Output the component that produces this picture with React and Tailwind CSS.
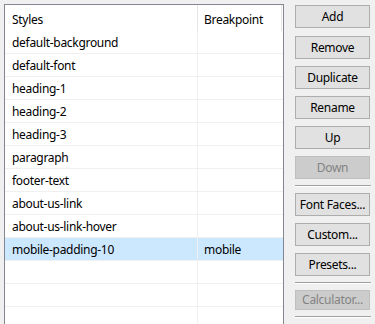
const styles = [
  { name: 'default-background', bp: '' },
  { name: 'default-font', bp: '' },
  { name: 'heading-1', bp: '' },
  { name: 'heading-2', bp: '' },
  { name: 'heading-3', bp: '' },
  { name: 'paragraph', bp: '' },
  { name: 'footer-text', bp: '' },
  { name: 'about-us-link', bp: '' },
  { name: 'about-us-link-hover', bp: '' },
  { name: 'mobile-padding-10', bp: 'mobile', selected: true },
  { name: '', bp: '' },
  { name: '', bp: '' },
  { name: '', bp: '' },
];

const Button = ({ label, disabled }) => (
  <div
    className={`h-[23px] w-[75px] flex items-center justify-center border text-[12px] ${
      disabled ? 'bg-[#cccccc] border-[#bfbfbf] text-[#838383]' : 'bg-[#e1e1e1] border-[#adadad] text-black'
    }`}
  >
    {label}
  </div>
);

const Separator = () => (
  <div className="my-[6px] w-[76px]">
    <div className="h-px bg-[#a0a0a0]"></div>
    <div className="h-px bg-white"></div>
  </div>
);

const App = () => {
  return (
    <div
      className="w-[375px] h-[324px] overflow-hidden bg-[#f0f0f0] flex pl-[4px] pt-[4px] tracking-[-0.3px]"
      style={{ fontFamily: '"Noto Sans", "Open Sans", sans-serif' }}
    >
      {/* list view */}
      <div className="w-[280px] h-[340px] border border-[#828790] bg-white flex flex-col shrink-0">
        <div className="flex h-[26px] text-[12px] text-black">
          <div className="w-[193px] pl-[7px] flex items-center pt-[3px] border-r border-[#e5e5e5]">Styles</div>
          <div className="w-[84px] pl-[6px] flex items-center pt-[3px] border-r border-[#e5e5e5]">Breakpoint</div>
        </div>
        {styles.map((row, i) => (
          <div
            key={i}
            className={`flex h-[23px] border-b border-[#f0f0f0] text-[12px] text-black ${
              row.selected ? 'bg-[#cce8ff]' : ''
            }`}
          >
            <div className="w-[193px] pl-[7px] pt-[1px] flex items-center border-r border-[#f0f0f0] leading-none">
              {row.name}
            </div>
            <div className="flex-1 pl-[6px] pt-[1px] flex items-center leading-none">{row.bp}</div>
          </div>
        ))}
      </div>

      {/* buttons */}
      <div className="ml-[11px] pt-[1px] flex flex-col">
        <div className="flex flex-col gap-[7px]">
          <Button label="Add" />
          <div className="mt-[1px]">
            <Button label="Remove" />
          </div>
          <Button label="Duplicate" />
          <Button label="Rename" />
          <Button label="Up" />
          <Button label="Down" disabled />
        </div>
        <Separator />
        <div className="flex flex-col gap-[7px]">
          <Button label="Font Faces..." />
          <Button label="Custom..." />
          <Button label="Presets..." />
        </div>
        <Separator />
        <Button label="Calculator..." disabled />
        <Separator />
      </div>
    </div>
  );
};

export default App;
